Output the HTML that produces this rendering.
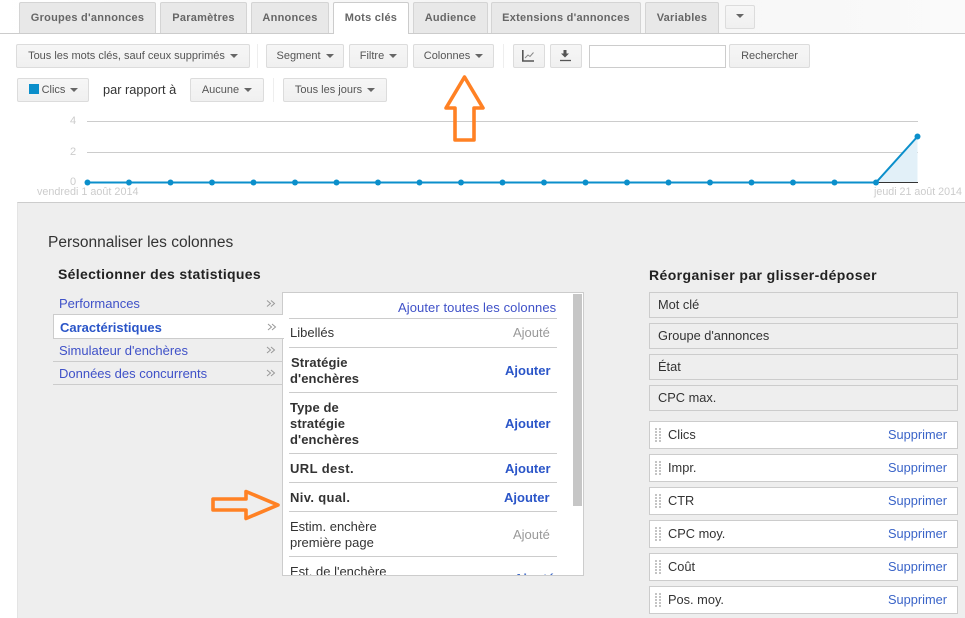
<!DOCTYPE html>
<html><head><meta charset="utf-8">
<style>
html,body{margin:0;padding:0;background:#fff}
#p{position:relative;width:965px;height:618px;overflow:hidden;background:#fff;font-family:"Liberation Sans",Arial,sans-serif;font-size:12px;color:#333}
#p div,#p svg.a{position:absolute;box-sizing:border-box;white-space:nowrap}
.tab{top:2px;height:31px;background:#e8e8e8;border:1px solid #d4d4d4;border-bottom:none;border-radius:2px 2px 0 0;font-weight:bold;font-size:11px;color:#666;text-align:center;line-height:31px;letter-spacing:.25px}
.btn{height:24px;background:linear-gradient(#f6f6f6,#f0f0f0);border:1px solid #dcdcdc;border-radius:2px;font-size:11px;color:#555;line-height:23px;text-align:center}
.c{display:inline-block;width:0;height:0;border-left:4px solid transparent;border-right:4px solid transparent;border-top:4px solid #666;margin-left:5px;vertical-align:1px}
.sep{width:1px;background:#eee}
.gr{left:87px;width:831px;height:1px;background:#ccc}
.ax{color:#ccc;font-size:11px;font-weight:normal}
.nav{left:53px;width:230px;height:23px;color:#3f51c8;font-size:13px;line-height:23px;padding-left:6px;border-bottom:1px solid #ccc}
.ch{fill:none;stroke:#999;stroke-width:1}
.ln{left:289px;width:268px;height:1px;background:#ccc}
.t{left:290px;font-size:13px;line-height:16px;color:#333;white-space:normal}
.b{font-weight:bold;letter-spacing:.1px}
.ad{left:505px;font-weight:bold;color:#2a55c8;font-size:13px;line-height:16px}
.ok{left:513px;color:#999;font-size:13px;line-height:16px}
.g{left:649px;width:309px;height:26px;border:1px solid #ccc;line-height:24px;padding-left:8px;font-size:12.800px;background:#eee}
.w{left:649px;width:309px;height:28px;background:#fff;border:1px solid #ccc;line-height:26px;padding-left:18px;font-size:12.800px}
.w span{position:absolute;right:10px;top:0;color:#3a64c8;font-size:12.800px}
.w i{position:absolute;left:5px;top:6px;width:6px;height:14px;background:linear-gradient(90deg,transparent 2px,#fff 2px,#fff 4px,transparent 4px),repeating-linear-gradient(#c4c4c4 0,#c4c4c4 2px,transparent 2px,transparent 3px)}
</style></head><body><div id="p">
<div style="left:0;top:0;width:965px;height:33px;background:linear-gradient(90deg,#fff 0,#f4f4f4 50%,#fafafa 100%)"></div>
<div style="left:0;top:33px;width:965px;height:1px;background:#ccc"></div>
<div class="tab" style="left:19px;width:137px">Groupes d'annonces</div>
<div class="tab" style="left:160px;width:87px">Paramètres</div>
<div class="tab" style="left:251px;width:78px">Annonces</div>
<div class="tab" style="left:333px;width:76px;height:32px;background:#fff;border-color:#ccc">Mots clés</div>
<div class="tab" style="left:413px;width:75px">Audience</div>
<div class="tab" style="left:491px;width:150px">Extensions d'annonces</div>
<div class="tab" style="left:645px;width:74px">Variables</div>
<div class="btn" style="left:725px;top:5px;width:30px;height:24px;line-height:20px;text-align:center"><span class="c" style="margin:0"></span></div>

<div class="btn" style="left:16px;top:44px;width:234px">Tous les mots clés, sauf ceux supprimés<span class="c"></span></div>
<div class="sep" style="left:257px;top:44px;height:24px"></div>
<div class="btn" style="left:266px;top:44px;width:78px">Segment<span class="c"></span></div>
<div class="btn" style="left:349px;top:44px;width:59px">Filtre<span class="c"></span></div>
<div class="btn" style="left:413px;top:44px;width:81px">Colonnes<span class="c"></span></div>
<div class="sep" style="left:503px;top:44px;height:24px"></div>
<div class="btn" style="left:513px;top:44px;width:32px"></div>
<div class="btn" style="left:550px;top:44px;width:32px"></div>
<svg style="position:absolute;left:513px;top:44px" width="70" height="24" fill="none"><path d="M9.800 6v11H21" stroke="#555" stroke-width="1.600"/><path d="M12 14l3-3 2 1.500 3.500-4" stroke="#888" stroke-width="1"/><path d="M50.500 6h3v3.500h2.500l-4 4-4-4h2.500z" fill="#555"/><path d="M47 16.500h11" stroke="#555" stroke-width="1.300"/></svg>
<div style="left:589px;top:45px;width:137px;height:23px;background:#fff;border:1px solid #ccc"></div>
<div class="btn" style="left:729px;top:44px;width:81px">Rechercher</div>

<div class="btn" style="left:17px;top:78px;width:72px;padding-left:14px"><span style="position:absolute;left:11px;top:5px;width:10px;height:10px;background:#0b8fcb"></span>Clics<span class="c"></span></div>
<div style="left:103px;top:82px;font-size:12.800px;line-height:16px;color:#333">par rapport à</div>
<div class="btn" style="left:190px;top:78px;width:74px">Aucune<span class="c"></span></div>
<div class="sep" style="left:273px;top:78px;height:24px"></div>
<div class="btn" style="left:283px;top:78px;width:104px">Tous les jours<span class="c"></span></div>

<div class="gr" style="top:121px"></div>
<div class="gr" style="top:152px"></div>
<div class="ax" style="left:70px;top:115px">4</div>
<div class="ax" style="left:70px;top:146px">2</div>
<div class="ax" style="left:70px;top:176px">0</div>
<div class="ax" style="left:37px;top:186px;font-size:10.800px">vendredi 1 août 2014</div>
<div class="ax" style="left:874px;top:186px;font-size:10.700px">jeudi 21 août 2014</div>
<svg style="position:absolute;left:80px;top:125px" width="850" height="65">
<path d="M796 57.500L837.500 11.500V57.500Z" fill="#e2f0f8"/>
<path d="M796 57.500H838" stroke="#333" stroke-width="1"/>
<path d="M7 57.500H796L837.500 11.500" fill="none" stroke="#0b8fcb" stroke-width="2"/>
<g fill="#0b8fcb"><circle cx="7.500" cy="57.500" r="3"/><circle cx="49" cy="57.500" r="3"/><circle cx="90.500" cy="57.500" r="3"/><circle cx="132" cy="57.500" r="3"/><circle cx="173.500" cy="57.500" r="3"/><circle cx="215" cy="57.500" r="3"/><circle cx="256.500" cy="57.500" r="3"/><circle cx="298" cy="57.500" r="3"/><circle cx="339.500" cy="57.500" r="3"/><circle cx="381" cy="57.500" r="3"/><circle cx="422.500" cy="57.500" r="3"/><circle cx="464" cy="57.500" r="3"/><circle cx="505.500" cy="57.500" r="3"/><circle cx="547" cy="57.500" r="3"/><circle cx="588.500" cy="57.500" r="3"/><circle cx="630" cy="57.500" r="3"/><circle cx="671.500" cy="57.500" r="3"/><circle cx="713" cy="57.500" r="3"/><circle cx="754.500" cy="57.500" r="3"/><circle cx="796" cy="57.500" r="3"/><circle cx="837.500" cy="11.500" r="3"/></g>
</svg>

<div style="left:17px;top:202px;width:948px;height:416px;background:#eee;border-top:1px solid #ccc;border-left:1px solid #e4e4e4"></div>
<div style="left:48px;top:233px;font-size:15.500px;line-height:19px;color:#333">Personnaliser les colonnes</div>
<div style="left:58px;top:266px;font-size:14px;line-height:17px;font-weight:bold;color:#222;letter-spacing:.32px">Sélectionner des statistiques</div>

<div class="nav" style="top:293px;height:23px;line-height:21px;border-bottom:2px solid #ccc">Performances</div>
<div class="nav" style="top:315px;height:24px;background:#fff;border:1px solid #ccc;border-top:none;border-right:none;color:#2a55c8;font-weight:bold;line-height:25px;padding-left:6px;width:231px;z-index:2">Caractéristiques</div>
<div class="nav" style="top:339px">Simulateur d'enchères</div>
<div class="nav" style="top:362px">Données des concurrents</div>
<svg class="a" style="left:266px;top:299px;z-index:4" width="12" height="80">
<path class="ch" d="M1 1.500l3.500 3-3.500 3M5 1.500l3.500 3-3.500 3"/>
<path class="ch" d="M2 25l3.500 3-3.500 3M6 25l3.500 3-3.500 3"/>
<path class="ch" d="M1 48l3.500 3-3.500 3M5 48l3.500 3-3.500 3"/>
<path class="ch" d="M1 71l3.500 3-3.500 3M5 71l3.500 3-3.500 3"/>
</svg>

<div style="left:282px;top:292px;width:302px;height:284px;background:#fff;border:1px solid #ccc;overflow:hidden"></div>
<div style="left:284px;top:316px;width:5px;height:22px;background:#fff;z-index:3"></div>
<div style="left:573px;top:294px;width:9px;height:212px;background:#c6c6c6"></div>
<div style="left:398px;top:300px;font-size:13px;line-height:16px;color:#3f51c8;letter-spacing:.08px">Ajouter toutes les colonnes</div>
<div class="ln" style="top:318px"></div>
<div class="t" style="top:325px">Libellés</div><div class="ok" style="top:325px">Ajouté</div>
<div class="ln" style="top:347px"></div>
<div class="t b" style="top:355px;left:291px">Stratégie<br><span style="margin-left:-1px">d'enchères</span></div><div class="ad" style="top:363px">Ajouter</div>
<div class="ln" style="top:392px"></div>
<div class="t b" style="top:400px">Type de<br>stratégie<br>d'enchères</div><div class="ad" style="top:416px">Ajouter</div>
<div class="ln" style="top:453px"></div>
<div class="t b" style="top:461px;letter-spacing:.4px">URL dest.</div><div class="ad" style="top:461px">Ajouter</div>
<div class="ln" style="top:482px"></div>
<div class="t b" style="top:490px;letter-spacing:.35px">Niv. qual.</div><div class="ad" style="top:490px;left:504px">Ajouter</div>
<div class="ln" style="top:511px"></div>
<div class="t" style="top:519px">Estim. enchère<br>première page</div><div class="ok" style="top:527px">Ajouté</div>
<div class="ln" style="top:556px"></div>
<div style="left:283px;top:557px;width:290px;height:18px;overflow:hidden"><div class="t" style="left:7px;top:7px">Est. de l'enchère</div><div class="ad" style="left:231px;top:14px;color:#3f6ac8">Ajouté</div></div>

<div style="left:649px;top:267px;font-size:14px;line-height:17px;font-weight:bold;color:#222;letter-spacing:.4px">Réorganiser par glisser-déposer</div>
<div class="g" style="top:292px">Mot clé</div>
<div class="g" style="top:323px">Groupe d'annonces</div>
<div class="g" style="top:354px">État</div>
<div class="g" style="top:385px">CPC max.</div>
<div class="w" style="top:421px"><i></i>Clics<span>Supprimer</span></div>
<div class="w" style="top:454px"><i></i>Impr.<span>Supprimer</span></div>
<div class="w" style="top:487px"><i></i>CTR<span>Supprimer</span></div>
<div class="w" style="top:520px"><i></i>CPC moy.<span>Supprimer</span></div>
<div class="w" style="top:553px"><i></i>Coût<span>Supprimer</span></div>
<div class="w" style="top:586px"><i></i>Pos. moy.<span>Supprimer</span></div>

<svg style="position:absolute;left:0;top:0;z-index:5" width="965" height="618" fill="none" stroke="#ff8124" stroke-width="3.600" stroke-linejoin="round">
<path d="M464.500 77L483 108H474V140H455V108H446Z"/>
<path d="M213 499H246V491.500L278 505L246 518.500V510H213Z"/>
</svg>
</div></body></html>
